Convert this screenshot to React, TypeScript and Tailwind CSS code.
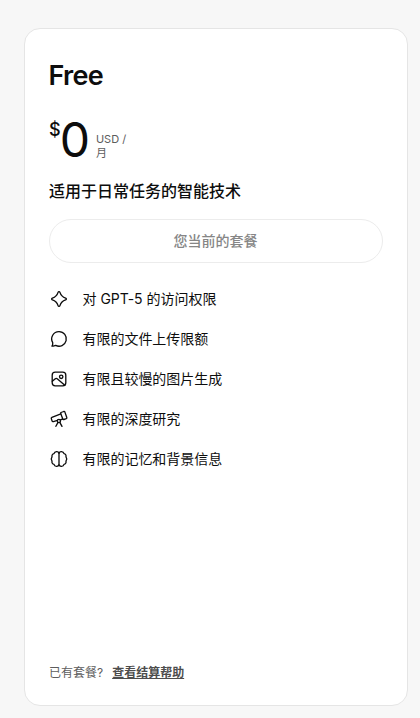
import React from 'react';

interface Feature {
  text: string;
  icon: React.ReactNode;
}

const features: Feature[] = [
  {
    text: '对 GPT-5 的访问权限',
    icon: (
      <path d="M10 2.6C10.45 2.6 10.8 2.95 10.95 3.4C11.9 6.5 13.4 8 16.6 9.05C17.6 9.4 17.6 10.6 16.6 10.95C13.4 12 11.9 13.5 10.95 16.6C10.65 17.6 9.35 17.6 9.05 16.6C8.1 13.5 6.6 12 3.4 10.95C2.4 10.6 2.4 9.4 3.4 9.05C6.6 8 8.1 6.5 9.05 3.4C9.2 2.95 9.55 2.6 10 2.6Z" />
    ),
  },
  {
    text: '有限的文件上传限额',
    icon: (
      <path d="M10.1 2.6A7.3 7.3 0 1 1 6.7 16.4C5.6 16.7 4.4 17.2 3 17.2C3.6 16.2 3.9 15 3.7 13.6A7.3 7.3 0 0 1 10.1 2.6Z" />
    ),
  },
  {
    text: '有限且较慢的图片生成',
    icon: (
      <>
        <rect x="3.2" y="3.2" width="13.6" height="13.6" rx="3" />
        <circle cx="12.2" cy="7.8" r="1.7" />
        <path d="M3.3 12.3L6 9.9C6.8 9.2 7.7 9.2 8.5 9.9L15.8 16.2" />
      </>
    ),
  },
  {
    text: '有限的深度研究',
    icon: (
      <>
        <path d="M12 3.5L14.7 2.5C15.3 2.3 15.7 2.6 15.9 3.1L17.8 8.5C18 9.1 17.7 9.5 17.3 9.7L14.9 10.5C14.4 10.7 14 10.4 13.8 9.9L11.7 4.4C11.5 4 11.6 3.7 12 3.5Z" />
        <path d="M11.8 4.9L2.9 8.3C2.3 8.6 2.1 9.1 2.3 9.6L3.1 12C3.3 12.6 3.8 12.8 4.4 12.6L8.4 11.4M11.3 10.8L13.8 10" />
        <circle cx="9.9" cy="12" r="1.6" />
        <path d="M9 13.4L6.9 17.3M10.8 13.4L13 17.3" />
      </>
    ),
  },
  {
    text: '有限的记忆和背景信息',
    icon: (
      <>
        <path d="M10 4.2V15.8" />
        <path d="M10 4.2C9.6 3 8.6 2.5 7.5 2.6C6.2 2.7 5.3 3.5 5 4.7C3.4 4.9 2.7 6.2 3 7.8C2 9.2 2 10.8 3 12.2C2.7 13.8 3.4 15.1 5 15.3C5.3 16.5 6.2 17.3 7.5 17.4C8.6 17.5 9.6 17 10 15.8C10.4 17 11.4 17.5 12.5 17.4C13.8 17.3 14.7 16.5 15 15.3C16.6 15.1 17.3 13.8 17 12.2C18 10.8 18 9.2 17 7.8C17.3 6.2 16.6 4.9 15 4.7C14.7 3.5 13.8 2.7 12.5 2.6C11.4 2.5 10.4 3 10 4.2Z" />
      </>
    ),
  },
];

const FeatureRow: React.FC<Feature> = ({ text, icon }) => (
  <li className="flex h-5 items-center gap-[13.5px]">
    <svg
      className="size-5 shrink-0"
      viewBox="0 0 20 20"
      fill="none"
      stroke="currentColor"
      strokeWidth="1.33"
      strokeLinecap="round"
      strokeLinejoin="round"
    >
      {icon}
    </svg>
    <span className="text-sm leading-5 tracking-[-0.002em] whitespace-nowrap">{text}</span>
  </li>
);

const App: React.FC = () => {
  return (
    <main className="flex h-[718px] w-[420px] bg-[#f7f7f7] pt-7 pr-3 pb-3 pl-6 font-[Inter,'Noto_Sans_CJK_SC',sans-serif] text-[#0d0d0d]">
      <section className="flex w-full flex-col rounded-2xl border border-[#e5e5e5] bg-white px-6 pt-[29px] pb-5">
        <h2 className="-ml-[0.5px] text-[27px] leading-9 font-[560] tracking-[-0.025em]">Free</h2>

        <div className="mt-[22px] flex h-12 items-end">
          <span className="self-start pt-0.5 text-lg leading-6 font-medium">$</span>
          <span className="-ml-px text-5xl leading-12">0</span>
          <div className="ml-1.5 pb-1 text-[11px] leading-[14px] text-[#5d5d5d]">
            <p>USD /</p>
            <p>月</p>
          </div>
        </div>

        <p className="mt-[15px] text-base leading-6 font-medium">适用于日常任务的智能技术</p>

        <button
          disabled
          className="mt-4 h-11 w-full shrink-0 rounded-full border border-[#ececec] pr-px text-sm font-medium text-[#868686]"
        >
          您当前的套餐
        </button>

        <ul className="mt-[26px] flex flex-col gap-5">
          {features.map((feature) => (
            <FeatureRow key={feature.text} {...feature} />
          ))}
        </ul>

        <footer className="mt-auto flex gap-[9px] text-xs leading-6 text-[#5d5d5d]">
          <span>已有套餐?</span>
          <a href="#" className="font-semibold text-[#4d4d4d] underline">查看结算帮助</a>
        </footer>
      </section>
    </main>
  );
};

export default App;
